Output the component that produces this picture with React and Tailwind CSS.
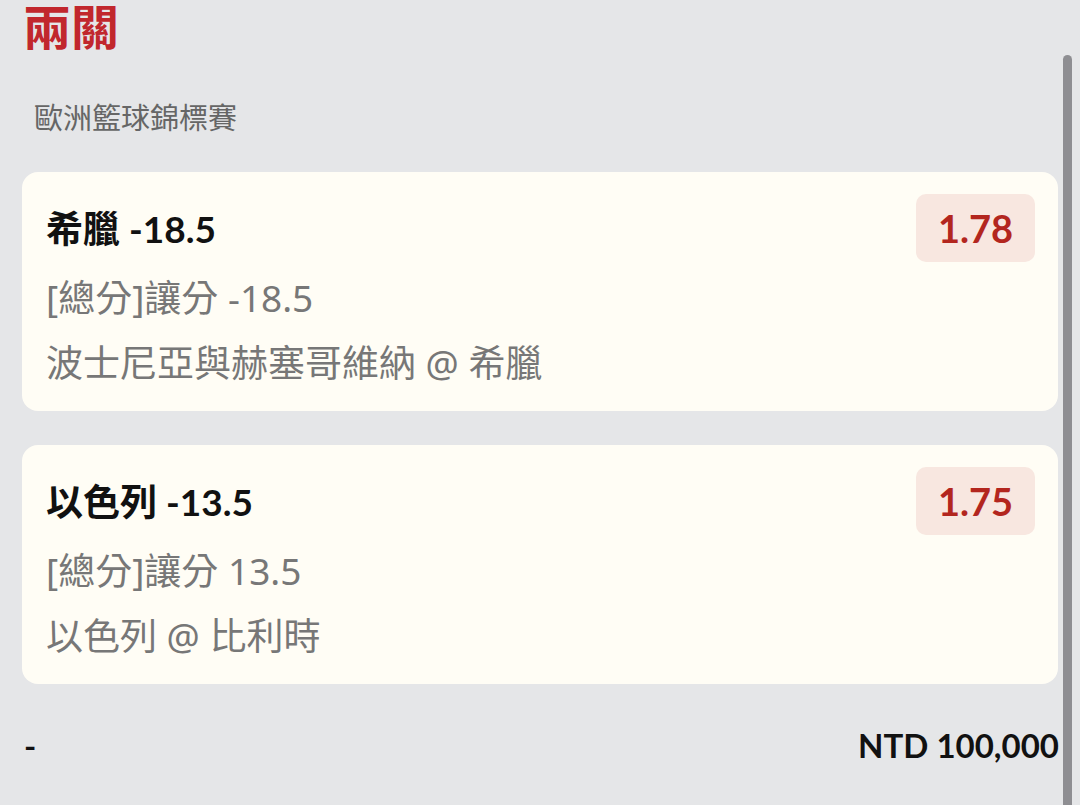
const bets = [
  {
    pick: '希臘 -18.5',
    odds: '1.78',
    market: '[總分]讓分 -18.5',
    match: '波士尼亞與赫塞哥維納 @ 希臘',
  },
  {
    pick: '以色列 -13.5',
    odds: '1.75',
    market: '[總分]讓分 13.5',
    match: '以色列 @ 比利時',
  },
];

const lato = "font-['Lato','Noto_Sans_CJK_TC',sans-serif]";
const noto = "font-['Noto_Sans','Noto_Sans_CJK_TC',sans-serif]";

function BetCard({ bet }) {
  return (
    <div className="rounded-[16px] bg-[#fffdf5] pt-[22px] pr-[23px] pb-[16px] pl-[24px]">
      <div className="flex h-[68px] items-center justify-between">
        <div className={`${lato} text-[37px] font-bold leading-none text-[#111]`}>{bet.pick}</div>
        <div
          className={`${lato} flex h-[68px] w-[119px] items-center justify-center rounded-[10px] bg-[#f8e7e0] text-[38px] font-bold text-[#b3261e]`}
        >
          {bet.odds}
        </div>
      </div>
      <div className={`${noto} mt-[3px] text-[37px] leading-[65px] text-[#777]`}>{bet.market}</div>
      <div className={`${noto} text-[37px] leading-[65px] text-[#777]`}>{bet.match}</div>
    </div>
  );
}

export default function App() {
  return (
    <div className="relative h-[805px] w-[1080px] overflow-hidden bg-[#e5e6e8] px-[22px]">
      {/* Title */}
      <h1 className="ml-[1px] font-['Noto_Sans_CJK_TC',sans-serif] text-[48px] font-bold leading-[48px] text-[#c1272d]">
        兩關
      </h1>
      <div className={`${noto} mt-[50px] pl-[12px] text-[29px] leading-[40px] text-[#666]`}>歐洲籃球錦標賽</div>

      {/* Cards */}
      <div className="mt-[34px] flex flex-col gap-[34px]">
        {bets.map((bet) => (
          <BetCard key={bet.pick} bet={bet} />
        ))}
      </div>

      {/* Footer */}
      <div className={`${lato} mt-[41px] flex items-center justify-between text-[33px] font-bold leading-[40px] text-[#111]`}>
        <span className="pl-[2px]">-</span>
        <span className="-mr-[1px]">NTD 100,000</span>
      </div>

      {/* Scrollbar */}
      <div className="absolute top-[55px] right-[8px] bottom-0 w-[9px] rounded-t-full bg-[#8e8e92]" />
    </div>
  );
}
